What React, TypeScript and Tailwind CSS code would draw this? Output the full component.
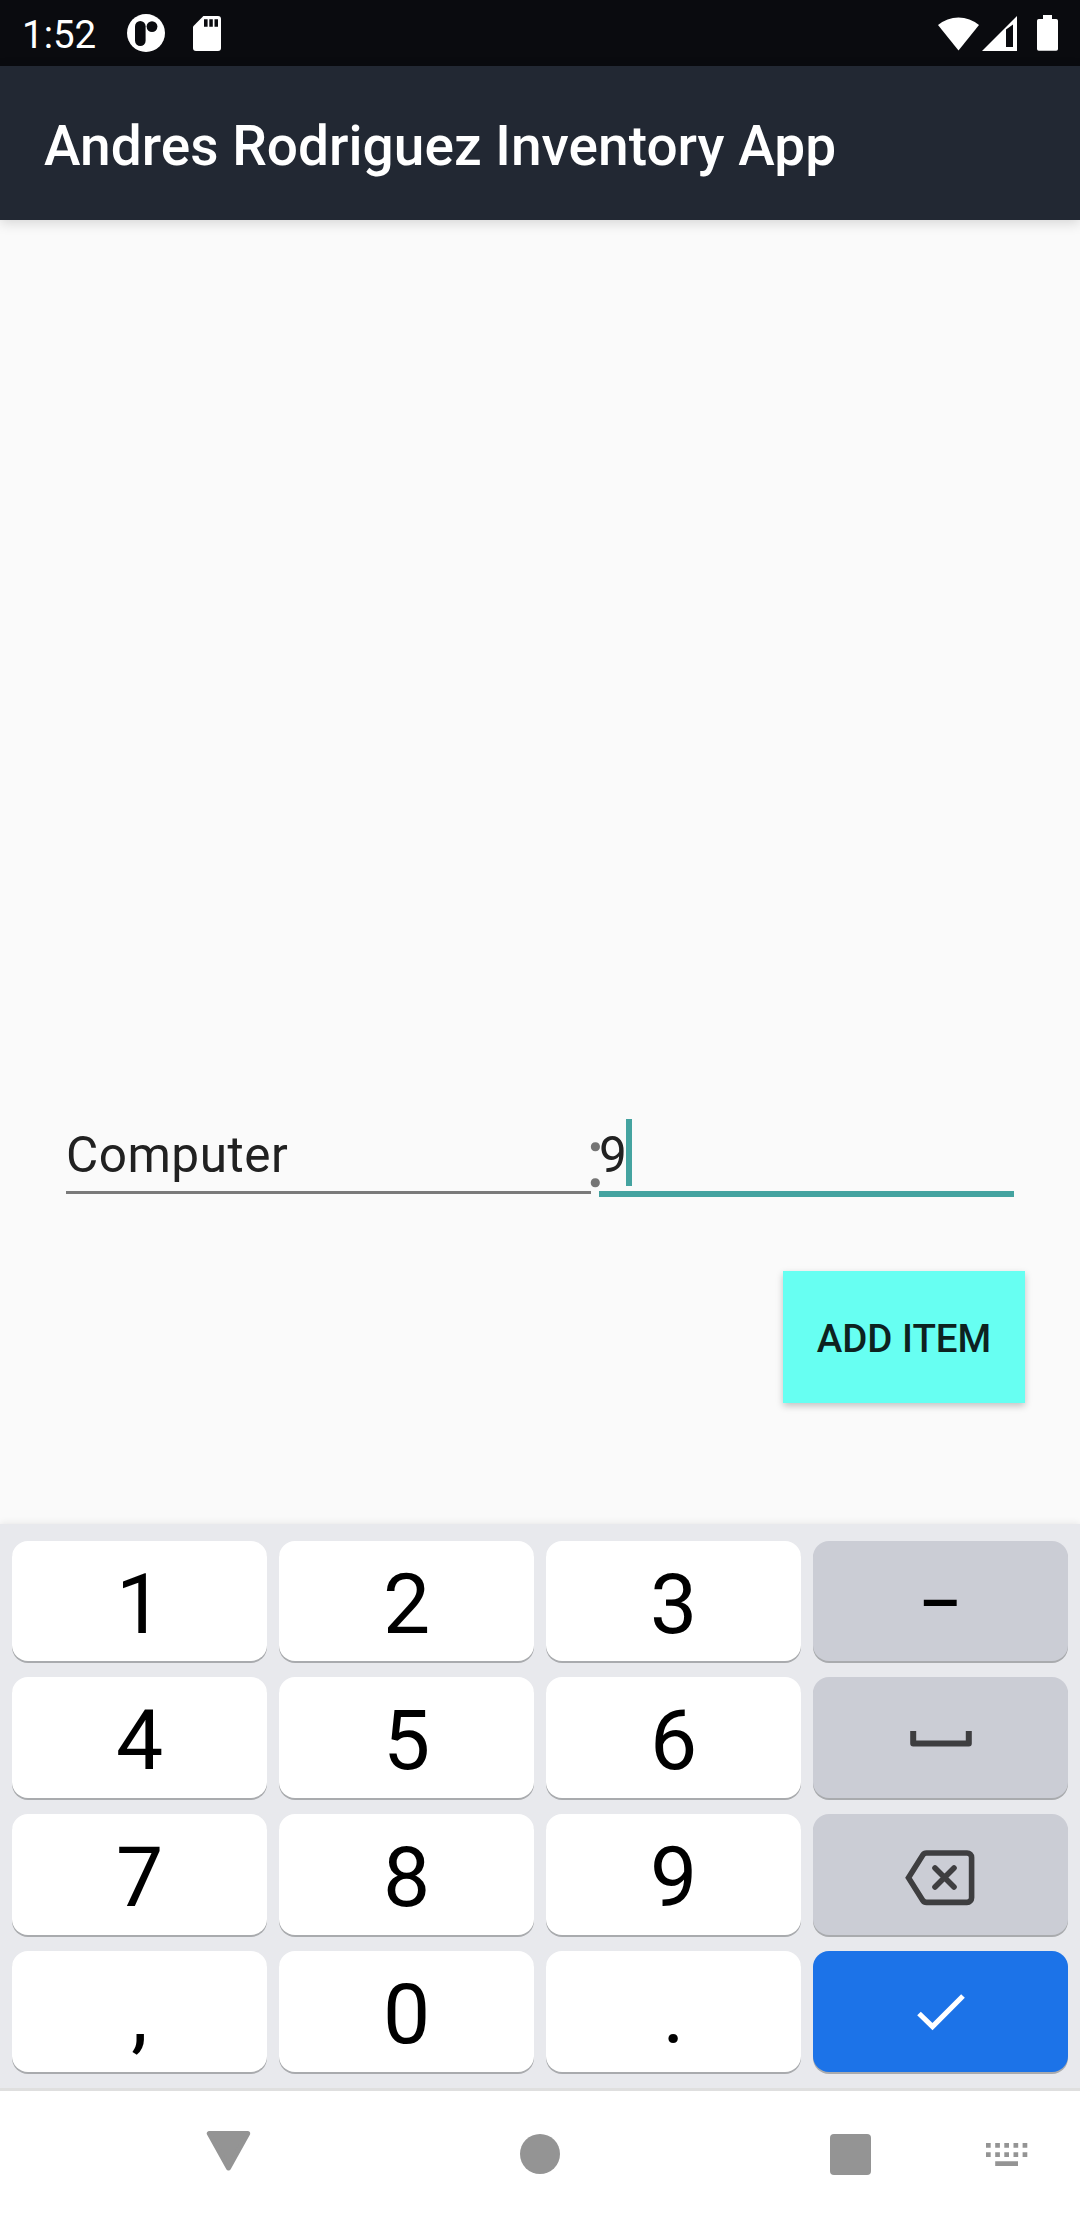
import type { ReactNode } from "react";

function StatusBar() {
  return (
    <div className="flex h-[66px] items-center justify-between bg-[#0a0b0f] pl-[22px] pr-[22px] text-white">
      <div className="flex items-center">
        <span className="w-[105px] pt-[4px] text-[38.5px] leading-[66px]">1:52</span>
        <svg className="h-[38px] w-[38px]" viewBox="0 0 38 38">
          <circle cx="19" cy="19" r="19" fill="#fff" />
          <rect x="8" y="7" width="10.6" height="25" rx="5.3" fill="#0a0b0f" />
          <circle cx="25" cy="12.6" r="5.4" fill="#0a0b0f" />
        </svg>
        <svg className="ml-[28px] h-[35px] w-[28px]" viewBox="0 0 28 35">
          <path
            fill="#fff"
            d="M10.4 0H25a3 3 0 0 1 3 3V32a3 3 0 0 1-3 3H3a3 3 0 0 1-3-3V10.6z"
          />
          <path fill="#0a0b0f" d="M11 3.3h3.6v7.4H11zM16.3 3.3h3.5v7.4h-3.5zM21.5 3.3H25v7.4h-3.5z" />
        </svg>
      </div>
      <div className="flex items-center">
        <svg className="h-[35px] w-[41px]" viewBox="0 0 41 35">
          <path fill="#fff" d="M0 9A32 32 0 0 1 41 9L20.500 34.500z" />
        </svg>
        <svg className="ml-[3px] h-[35px] w-[35px]" viewBox="0 0 35 35">
          <path fill="#fff" fillRule="evenodd" d="M0 35L35 0V35zM24 13.500V31H31V8.500z" />
        </svg>
        <svg className="ml-[20px] h-[36px] w-[21px]" viewBox="0 0 21 36">
          <path
            fill="#fff"
            d="M6 0h9v4h4.200a1.800 1.800 0 0 1 1.800 1.800V34a1.800 1.800 0 0 1-1.800 1.800H1.800A1.800 1.800 0 0 1 0 34V5.800A1.800 1.800 0 0 1 1.800 4H6z"
          />
        </svg>
      </div>
    </div>
  );
}

function Form() {
  return (
    <main className="flex flex-1 flex-col">
      <div className="mt-[899px] flex h-[79px] pl-[66px]">
        <div className="flex h-[75px] w-[525px] flex-col border-b-[3px] border-[#7a7a7a]">
          <span className="text-[49.5px] leading-[73px] tracking-[0.5px] text-[#212121]">Computer</span>
        </div>
        <div className="relative w-[8px]">
          <span className="absolute left-[-4px] top-[-7px] text-[80px] font-light leading-[95px] text-[#757575] [-webkit-text-stroke:2.5px_#757575]">
            :
          </span>
        </div>
        <div className="relative flex h-[78px] w-[415px] items-start border-b-[6px] border-[#44a3a0]">
          <span className="text-[49.5px] leading-[73px] text-[#212121]">9</span>
          <span className="-ml-px h-[67px] w-[6px] bg-[#44a3a0]" />
        </div>
      </div>
      <button className="mt-[73px] ml-[783px] h-[132px] w-[242px] bg-[#67fff2] pt-[3px] text-[38.5px] font-medium text-[#0d2220] shadow-[0_3px_7px_rgba(0,0,0,0.22)]">
        ADD ITEM
      </button>
    </main>
  );
}

function Key({ tone = "light", children }: { tone?: "light" | "grey" | "blue"; children: ReactNode }) {
  const bg = tone === "light" ? "bg-white" : tone === "grey" ? "bg-[#cbcdd5]" : "bg-[#1c73e8]";
  return (
    <button
      className={`flex items-center justify-center rounded-[16px] text-[84px] leading-[114px] text-black shadow-[0_2px_0_#a9abae] ${bg}`}
    >
      {children}
    </button>
  );
}

function Digit({ children }: { children: ReactNode }) {
  return (
    <Key>
      <span className="pt-[7px]">{children}</span>
    </Key>
  );
}

function Keyboard() {
  return (
    <section className="h-[564px] bg-[#e8e9ed] px-3 pt-[17px] shadow-[0_-1px_7px_rgba(0,0,0,0.08)]">
      <div className="grid grid-cols-4 grid-rows-[120px_121px_121px_121px] gap-x-3 gap-y-4">
        <Digit>1</Digit>
        <Digit>2</Digit>
        <Digit>3</Digit>
        <Key tone="grey">
          <span className="scale-x-[0.8] pt-[7px]">–</span>
        </Key>
        <Digit>4</Digit>
        <Digit>5</Digit>
        <Digit>6</Digit>
        <Key tone="grey">
          <svg className="mt-[2px] h-[17px] w-[62px]" viewBox="0 0 62 17">
            <path d="M3.200 1V13.500H58.800V1" fill="none" stroke="#3e3e40" strokeWidth="6" strokeLinejoin="round" />
          </svg>
        </Key>
        <Digit>7</Digit>
        <Digit>8</Digit>
        <Digit>9</Digit>
        <Key tone="grey">
          <svg className="mt-[7px] mr-[2px] h-[56px] w-[70px]" viewBox="0 0 70 56">
            <g fill="none" stroke="#3e3e40" strokeWidth="5.600">
              <path d="M21.500 3H62a4.600 4.600 0 0 1 4.600 4.600V47.800a4.600 4.600 0 0 1-4.600 4.600H21.500a4.500 4.500 0 0 1-3.700-2L3.500 27.700L17.800 5a4.500 4.500 0 0 1 3.700-2z" />
              <path d="M30 18L49 37M49 18L30 37" strokeLinecap="round" />
            </g>
          </svg>
        </Key>
        <Digit>,</Digit>
        <Digit>0</Digit>
        <Digit>.</Digit>
        <Key tone="blue">
          <svg className="mt-px h-[38px] w-[50px]" viewBox="0 0 50 38">
            <path d="M3 20.500L16.500 33.500L47 3" fill="none" stroke="#fff" strokeWidth="5.200" />
          </svg>
        </Key>
      </div>
    </section>
  );
}

function NavBar() {
  return (
    <nav className="flex h-[132px] border-t-[3px] border-[#dfdfdf] bg-white pl-[206px]">
      <svg className="mt-[40px] h-[40px] w-[45px]" viewBox="0 0 45 40">
        <path
          fill="#949494"
          stroke="#949494"
          strokeWidth="5"
          strokeLinejoin="round"
          d="M3.300 2.500H41.700L22.500 37z"
        />
      </svg>
      <span className="ml-[269px] mt-[43px] h-[40px] w-[40px] rounded-full bg-[#949494]" />
      <span className="ml-[270px] mt-[43px] h-[41px] w-[41px] rounded-[4px] bg-[#949494]" />
      <svg className="ml-[115px] mt-[52px] h-[23px] w-[42px]" viewBox="0 0 42 23">
        <path
          fill="#949494"
          d="M0 0h4.700v4.700H0zM9.200 0h4.700v4.700H9.200zM18.300 0H23v4.700h-4.700zM27.500 0h4.700v4.700h-4.700zM36.600 0h4.700v4.700h-4.700zM0 9.200h4.700v4.700H0zM9.200 9.200h4.700v4.700H9.200zM18.300 9.200H23v4.700h-4.700zM27.500 9.200h4.700v4.700h-4.700zM36.600 9.200h4.700v4.700h-4.700zM9.200 18.300H32V23H9.200z"
        />
      </svg>
    </nav>
  );
}

export default function App() {
  return (
    <div className="flex h-[2220px] w-[1080px] flex-col overflow-hidden bg-[#fafafa] font-['Roboto',sans-serif]">
      <StatusBar />
      <header className="flex h-[154px] items-center bg-[#222833] pl-[44px] shadow-[0_3px_12px_rgba(0,0,0,0.15)]">
        <h1 className="pt-[6px] text-[55px] font-medium leading-[64px] tracking-[0.03px] text-white">
          Andres Rodriguez Inventory App
        </h1>
      </header>
      <Form />
      <Keyboard />
      <NavBar />
    </div>
  );
}
